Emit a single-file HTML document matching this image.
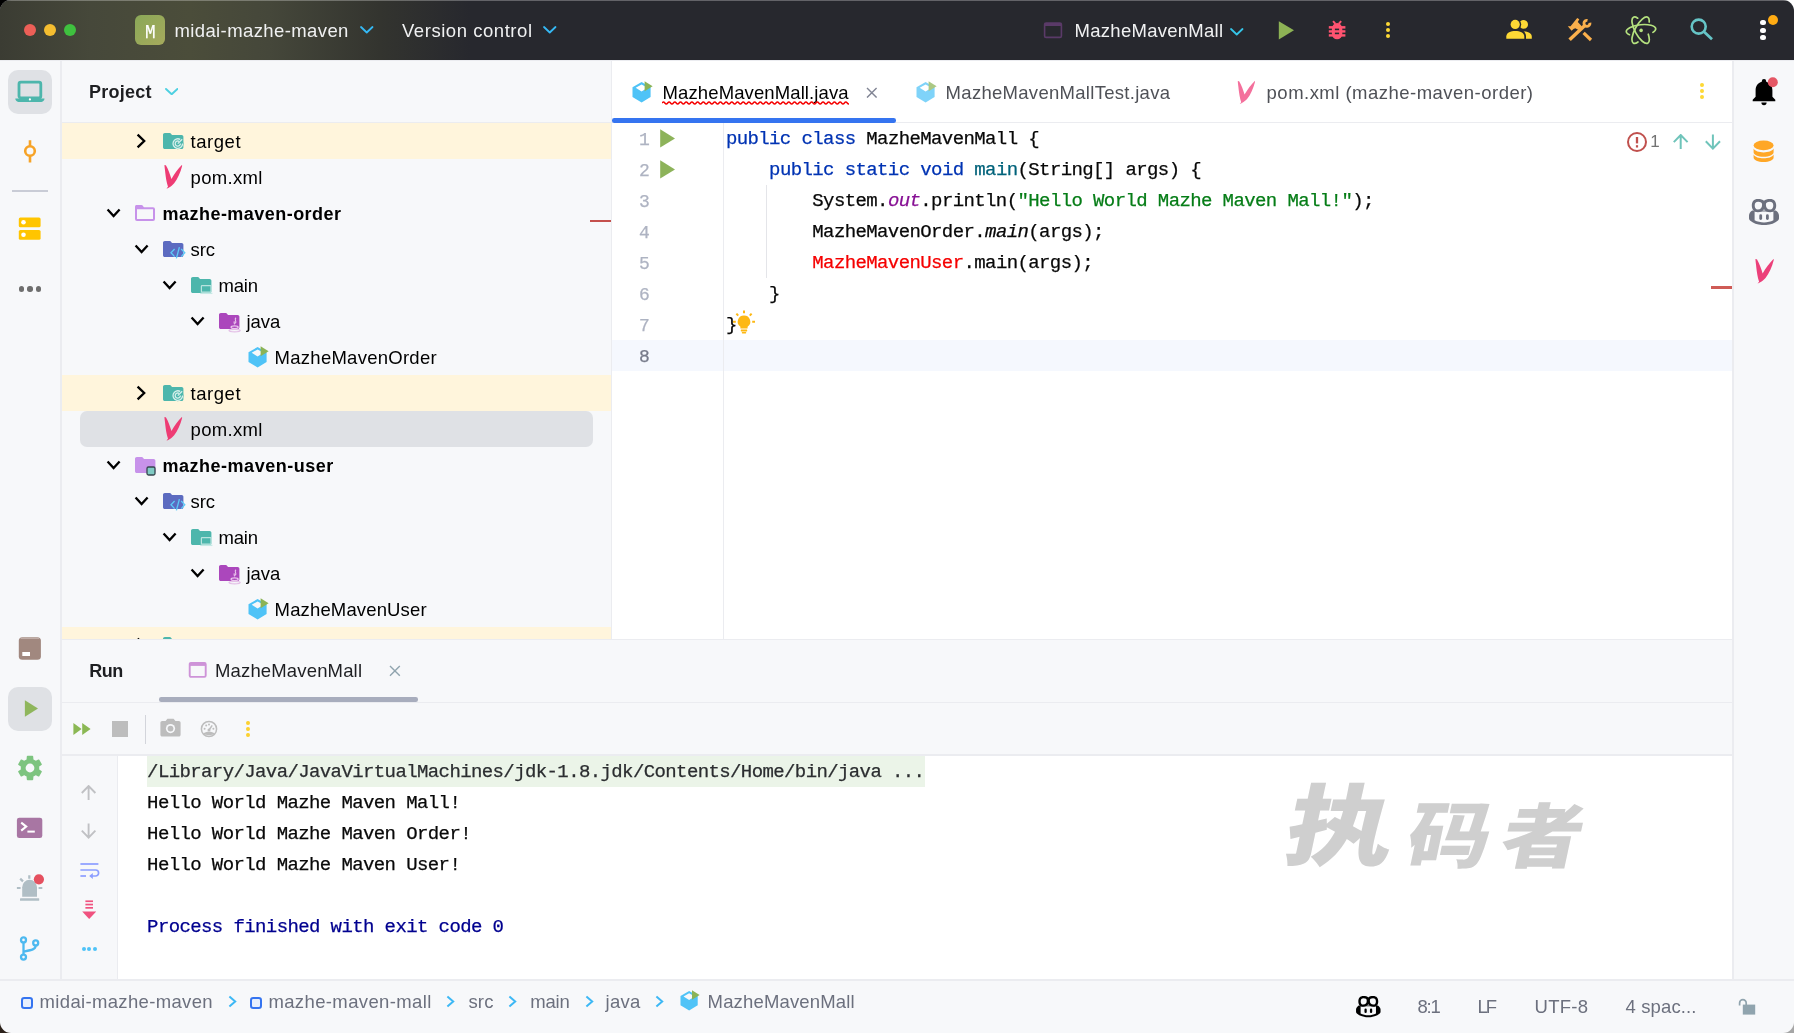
<!DOCTYPE html>
<html lang="en"><head><meta charset="utf-8"><title>midai-mazhe-maven – MazheMavenMall.java</title>
<style>
html,body{margin:0;padding:0;}
body{width:1794px;height:1033px;overflow:hidden;background:#fff;position:relative;font-family:"Liberation Sans",sans-serif;}
#win{position:absolute;left:0;top:0;width:1794px;height:1033px;overflow:hidden;will-change:transform;}
.b{position:absolute;display:block;}
.t{position:absolute;white-space:pre;display:block;}
</style></head><body><div id="win">
<div class="b" style="left:0px;top:0px;width:14px;height:14px;background:#000;"></div>
<div class="b" style="left:1780px;top:0px;width:14px;height:14px;background:#fff;"></div>
<div class="b" style="left:0px;top:1019px;width:14px;height:14px;background:#2b211a;"></div>
<div class="b" style="left:1780px;top:1019px;width:14px;height:14px;background:#a6a6a6;"></div>
<div class="b" style="left:0;top:0;width:1794px;height:1033px;border-radius:11px;overflow:hidden;background:#f7f8fa">
<div class="b" style="left:0;top:0;width:1794px;height:60px;background:#27282e"></div>
<div class="b" style="left:0;top:0;width:520px;height:60px;background:linear-gradient(90deg,#3b3c33 0px,#46483a 90px,#4b4d3a 190px,#45473a 270px,#33342f 380px,#27282e 470px)"></div>
<div class="b" style="left:0;top:0;width:1794px;height:1px;background:rgba(255,255,255,.28)"></div>
<div class="b" style="left:612px;top:61px;width:1121px;height:579px;background:#fff;"></div>
<div class="b" style="left:118px;top:755px;width:1615px;height:225px;background:#fff;"></div>
</div>
<div class="b" style="left:0px;top:60px;width:1794px;height:1px;background:#ebecf0;"></div>
<div class="b" style="left:60px;top:61px;width:1.5px;height:919px;background:#ebecf0;"></div>
<div class="b" style="left:611px;top:61px;width:1px;height:578px;background:#ebecf0;"></div>
<div class="b" style="left:1732px;top:61px;width:1.5px;height:919px;background:#ebecf0;"></div>
<div class="b" style="left:62px;top:122px;width:549px;height:1px;background:#ebecf0;"></div>
<div class="b" style="left:612px;top:122px;width:1120px;height:1px;background:#ebecf0;"></div>
<div class="b" style="left:61px;top:639px;width:1672px;height:1px;background:#ebecf0;"></div>
<div class="b" style="left:61px;top:701.5px;width:1672px;height:1px;background:#ebecf0;"></div>
<div class="b" style="left:61px;top:754px;width:1672px;height:1.5px;background:#ebecf0;"></div>
<div class="b" style="left:117px;top:755px;width:1px;height:225px;background:#ebecf0;"></div>
<div class="b" style="left:0px;top:979px;width:1794px;height:1.5px;background:#ebecf0;"></div>
<div class="b" style="left:723px;top:123px;width:1px;height:516px;background:#ebecf0;"></div>
<div class="b" style="left:24px;top:24px;width:12px;height:12px;background:#ec5f57;border-radius:50%"></div>
<div class="b" style="left:44px;top:24px;width:12px;height:12px;background:#f4bd30;border-radius:50%"></div>
<div class="b" style="left:64px;top:24px;width:12px;height:12px;background:#3fc13f;border-radius:50%"></div>
<div class="b" style="left:135px;top:15px;width:30px;height:30px;border-radius:6px;background:linear-gradient(135deg,#8aa858,#a6aa5c)"></div>
<span class="t" style="left:145.20px;top:20.54px;font:normal normal 20.5px/24px 'Liberation Mono', monospace;color:#fff;-webkit-text-stroke:0.25px;transform:scaleX(.86);transform-origin:left center;">M</span>
<span class="t" style="left:174.40px;top:18.99px;font:normal normal 18.5px/24px 'Liberation Sans', sans-serif;color:#f0f1f2;letter-spacing:0.400px;">midai-mazhe-maven</span>
<span class="t" style="left:402.00px;top:18.99px;font:normal normal 18.5px/24px 'Liberation Sans', sans-serif;color:#f0f1f2;letter-spacing:0.545px;">Version control</span>
<svg class="b" style="left:360px;top:26px;" width="13.5" height="8" viewBox="0 0 13.5 8"><path d="M1 1 L6.75 6.5 L12.5 1" fill="none" stroke="#35b9f5" stroke-width="1.8" stroke-linecap="round" stroke-linejoin="round"/></svg>
<svg class="b" style="left:543px;top:26px;" width="13.5" height="8" viewBox="0 0 13.5 8"><path d="M1 1 L6.75 6.5 L12.5 1" fill="none" stroke="#35b9f5" stroke-width="1.8" stroke-linecap="round" stroke-linejoin="round"/></svg>
<svg class="b" style="left:1043px;top:21px;" width="20" height="18" viewBox="0 0 20 18"><rect x="1.6" y="2" width="16.8" height="14.4" rx="1.5" fill="none" stroke="#5a3a68" stroke-width="1.6"/><rect x="1.6" y="2" width="16.8" height="3" fill="#5a3a68"/></svg>
<span class="t" style="left:1074.60px;top:18.99px;font:normal normal 18.5px/24px 'Liberation Sans', sans-serif;color:#f0f1f2;letter-spacing:0.270px;">MazheMavenMall</span>
<svg class="b" style="left:1230px;top:28px;" width="13.5" height="8" viewBox="0 0 13.5 8"><path d="M1 1 L6.75 6.5 L12.5 1" fill="none" stroke="#35c5e8" stroke-width="1.8" stroke-linecap="round" stroke-linejoin="round"/></svg>
<svg class="b" style="left:1277px;top:20px;" width="20" height="21" viewBox="0 0 20 21"><path d="M1.8 1.2 L17 10.2 L1.8 19.4 Z" fill="#8db255"/></svg>
<svg class="b" style="left:1327px;top:19px;" width="20" height="22" viewBox="0 0 20 22"><g fill="#ff5370"><rect x="4.900" y="4" width="10.400" height="16.300" rx="5.200" ry="5.600"/><rect x="1.800" y="7.100" width="16.600" height="2.500"/><rect x="1.800" y="11.200" width="16.600" height="2.400"/><rect x="1.800" y="15.200" width="16.600" height="2.400"/><path d="M5.300 2.800 L6.800 1.500 L9.200 4.300 L7.700 5.600Z M14.900 2.800 L13.400 1.500 L11 4.300 L12.500 5.600Z"/></g><rect x="7.900" y="9.600" width="4.200" height="1.600" fill="#27282e"/><rect x="7.900" y="13.600" width="4.200" height="1.600" fill="#27282e"/></svg>
<div class="b" style="left:1385.9px;top:21.9px;width:4.2px;height:4.2px;background:#fdd835;border-radius:50%"></div>
<div class="b" style="left:1385.9px;top:28.099999999999998px;width:4.2px;height:4.2px;background:#fdd835;border-radius:50%"></div>
<div class="b" style="left:1385.9px;top:34.3px;width:4.2px;height:4.2px;background:#fdd835;border-radius:50%"></div>
<svg class="b" style="left:1505px;top:18px;" width="28" height="22" viewBox="0 0 28 22"><g fill="#fdd835"><circle cx="18.600" cy="6.400" r="4.400"/><path d="M21 20.800 V18.200 C21 16.200 20.200 14.600 18.600 13.300 C22.600 13.600 26.800 15.200 26.800 18.400 V20.800Z"/></g><circle cx="10.200" cy="6.400" r="6" fill="#27282e"/><g fill="#fdd835"><circle cx="10.200" cy="6.400" r="4.600"/><path d="M1.300 20.800 V18.400 C1.300 14.800 5.800 13 10.300 13 S19.300 14.800 19.300 18.400 V20.800Z"/></g></svg>
<svg class="b" style="left:1566px;top:17px;" width="28" height="26" viewBox="0 0 28 26"><g stroke="#fbb04c" fill="none"><path d="M3.600 22.800 L18.800 8.400" stroke-width="3.500"/><path d="M25 23 L17.600 15.800" stroke-width="3.200"/><path d="M23.920 5.810 A3 3 0 1 1 21.490 3.380" stroke-width="2.900"/></g><path d="M1.800 9.300 L4.600 9.200 L11.200 1.100 L13.300 2.300 L11.800 5.100 L13.900 7.300 L16 9.400 L12.600 13 L9.300 11.200 L7.500 11.900 L5.600 13.700Z" fill="#fbb04c"/></svg>
<svg class="b" style="left:1625px;top:15px;" width="32" height="30" viewBox="0 0 32 30"><g fill="none" stroke="#b5e27f" stroke-width="1.700" stroke-linecap="round"><ellipse cx="16" cy="15.200" rx="14.800" ry="5.500" transform="rotate(-6 16 15.200)" stroke-dasharray="5 23.600 100"/><ellipse cx="15.600" cy="15.200" rx="14.800" ry="5.500" transform="rotate(61 15.600 15.200)" stroke-dasharray="38 19 100"/><ellipse cx="15.600" cy="15.200" rx="14.800" ry="5.500" transform="rotate(119 15.600 15.200)" stroke-dasharray="38.600 23 100"/></g><circle cx="16.100" cy="15.400" r="1.800" fill="#b5e27f"/></svg>
<svg class="b" style="left:1689px;top:17.1px;" width="26" height="25" viewBox="0 0 26 25"><circle cx="9.700" cy="9.600" r="7" fill="none" stroke="#66c5c7" stroke-width="2.600"/><path d="M15 14.800 L23 22.200" stroke="#66c5c7" stroke-width="2.800" stroke-linecap="butt"/></svg>
<div class="b" style="left:1760.4px;top:20.0px;width:5.2px;height:5.2px;background:#fff;border-radius:50%"></div>
<div class="b" style="left:1760.4px;top:27.599999999999998px;width:5.2px;height:5.2px;background:#fff;border-radius:50%"></div>
<div class="b" style="left:1760.4px;top:35.199999999999996px;width:5.2px;height:5.2px;background:#fff;border-radius:50%"></div>
<div class="b" style="left:1767.6px;top:14.8px;width:10.4px;height:10.4px;background:#ffab13;border-radius:50%"></div>
<div class="b" style="left:8px;top:70px;width:44px;height:44px;border-radius:10px;background:#dfe1e5"></div>
<svg class="b" style="left:14.6px;top:79.6px;" width="30" height="23" viewBox="0 0 30 23"><rect x="4" y="2.200" width="21.800" height="15.600" rx="1.800" fill="none" stroke="#4db6ac" stroke-width="2.800"/><path d="M0.300 18.600 h29.200 c0 1.900-1.300 3.300-3 3.300 h-23.200 c-1.700 0-3-1.400-3-3.300z" fill="#4db6ac"/><circle cx="14.900" cy="19.400" r="1.100" fill="#fff"/></svg>
<svg class="b" style="left:21.6px;top:139.4px;" width="16" height="24" viewBox="0 0 16 24"><circle cx="8" cy="12" r="4.800" fill="none" stroke="#f7a327" stroke-width="2.600"/><path d="M8 1.200 V7 M8 17 V23.400" stroke="#f7a327" stroke-width="2.600"/></svg>
<div class="b" style="left:12px;top:190px;width:36px;height:1.5px;background:#c9ccd6;"></div>
<svg class="b" style="left:18px;top:216px;" width="24" height="25" viewBox="0 0 24 25"><rect x="0.800" y="1.400" width="21.800" height="9.900" rx="1.600" fill="#ffc500"/><rect x="0.800" y="13.900" width="21.800" height="9.900" rx="1.600" fill="#ffc500"/><circle cx="5.500" cy="6.300" r="2.300" fill="#fff"/><circle cx="5.500" cy="18.800" r="2.300" fill="#fff"/></svg>
<div class="b" style="left:18.8px;top:286.3px;width:5.4px;height:5.4px;background:#6e6e6e;border-radius:50%"></div>
<div class="b" style="left:27.3px;top:286.3px;width:5.4px;height:5.4px;background:#6e6e6e;border-radius:50%"></div>
<div class="b" style="left:35.8px;top:286.3px;width:5.4px;height:5.4px;background:#6e6e6e;border-radius:50%"></div>
<svg class="b" style="left:18px;top:636px;" width="24" height="25" viewBox="0 0 24 25"><rect x="0.800" y="1.200" width="22.100" height="22.600" rx="3.600" fill="#a1887f"/><rect x="2.600" y="1.800" width="18.500" height="0.900" fill="#cdbdb7"/><rect x="4.300" y="16" width="7.700" height="4" fill="#fff"/></svg>
<div class="b" style="left:8px;top:687px;width:44px;height:44px;border-radius:10px;background:#dfe1e5"></div>
<svg class="b" style="left:22px;top:698px;" width="18" height="22" viewBox="0 0 18 22"><path d="M2.900 2.300 L16 10.500 L2.900 18.800 Z" fill="#8fb65c"/></svg>
<svg class="b" style="left:16.8px;top:755.3px;" width="26" height="26" viewBox="0 0 26 26"><path d="M15.41 24.35 L10.59 24.35 L10.34 21.18 L7.25 19.39 L4.38 20.76 L1.97 16.58 L4.59 14.79 L4.59 11.21 L1.97 9.42 L4.38 5.24 L7.25 6.61 L10.34 4.82 L10.59 1.65 L15.41 1.65 L15.66 4.82 L18.75 6.61 L21.62 5.24 L24.03 9.42 L21.41 11.21 L21.41 14.79 L24.03 16.58 L21.62 20.76 L18.75 19.39 L15.66 21.18Z" fill="#7dc47f" stroke="#7dc47f" stroke-width="1.600" stroke-linejoin="round"/><circle cx="13" cy="13" r="4.400" fill="#f7f8fa"/></svg>
<svg class="b" style="left:16px;top:816.7px;" width="28" height="22" viewBox="0 0 28 22"><rect x="0.900" y="0.700" width="25.400" height="20.400" rx="2.400" fill="#a876a3"/><path d="M5.200 5.600 L10.200 9.600 L5.200 13.600" fill="none" stroke="#fff" stroke-width="2.100"/><path d="M11.400 14.600 H18.800" stroke="#fff" stroke-width="2"/></svg>
<svg class="b" style="left:14px;top:870px;" width="34" height="34" viewBox="0 0 34 34"><g fill="#b0bec5"><path d="M8.200 26.800 v-9.600 a7.400 7.400 0 0 1 14.800 0 v9.600z"/><rect x="6" y="28.300" width="19.200" height="2.500" rx="0.400"/></g><g stroke="#b0bec5" stroke-width="2.200"><path d="M2.900 18 h3.700 M6.200 8.600 l2.800 2.800 M15.300 5.300 v3.400 M24.600 18 h3.700"/></g><circle cx="24.900" cy="9.300" r="5.100" fill="#e5505f"/></svg>
<svg class="b" style="left:19px;top:935px;" width="22" height="27" viewBox="0 0 22 27"><g fill="none" stroke="#4db9f0" stroke-width="2.300"><circle cx="4.500" cy="4.900" r="2.500"/><circle cx="4.500" cy="22.100" r="2.500"/><circle cx="16.700" cy="7.900" r="2.500"/><path d="M4.500 7.500 V19.500 M16.700 10.500 C16.700 14.600 12 15.200 4.500 16.600"/></g></svg>
<svg class="b" style="left:1751px;top:77px;" width="28" height="30" viewBox="0 0 28 30"><path d="M13 2 a2.2 2.2 0 0 1 2.2 2.2 v0.6 c3.9 1 6.2 4.3 6.2 8.4 v6.6 l2.9 2.9 v1.5 H1.7 v-1.5 l2.9-2.9 v-6.6 c0-4.1 2.3-7.4 6.2-8.4 v-0.6 A2.2 2.2 0 0 1 13 2z M10.4 25.6 h5.2 a2.6 2.6 0 0 1-5.2 0z" fill="#000"/><circle cx="21.8" cy="5.2" r="5" fill="#e55765"/></svg>
<svg class="b" style="left:1752px;top:139px;" width="24" height="24" viewBox="0 0 24 24"><g fill="#ffa726"><ellipse cx="11.6" cy="6.4" rx="10" ry="4.8"/><path d="M1.6 9.6 c1.4 2.6 5.4 3.8 10 3.8 s8.6-1.2 10-3.8 v3.6 c0 2.6-4.4 4.6-10 4.6 s-10-2-10-4.6z"/><path d="M1.6 15.4 c1.4 2.6 5.4 3.8 10 3.8 s8.6-1.2 10-3.8 v3 c0 2.6-4.4 4.6-10 4.6 s-10-2-10-4.6z"/></g></svg>
<svg class="b" style="left:1749px;top:198.7px;" width="30" height="26.2" viewBox="0 0 30 26.2"><path d="M3.2 11.6 C1.2 13 0 14.8 0 16.6 V19.6 C0 20.4 0.4 20.9 1 21.4 C4.6 24.4 9.6 26.1 15 26.1 S25.4 24.4 29 21.4 C29.6 20.9 30 20.4 30 19.6 V16.6 C30 14.8 28.8 13 26.800 11.600Z" fill="#6c707e"/><path d="M5.600 12.600 H24.400 V21.300 C21.700 22.700 18.500 23.500 15 23.500 S8.300 22.700 5.600 21.300Z" fill="#f7f8fa"/><path d="M9 0 C11.600 0 13.800 0.600 15 1.800 C16.200 0.600 18.400 0 21 0 C25.200 0 27.200 2.600 27.200 6.600 C27.200 10.800 24.800 13.200 21.200 13.200 C18.400 13.200 16.200 12.200 15 10.200 C13.800 12.200 11.600 13.200 8.800 13.200 C5.200 13.200 2.800 10.800 2.800 6.600 C2.800 2.600 4.800 0 9 0Z" fill="#6c707e"/><path d="M9.200 2.800 C11.800 2.800 13.100 3.600 13.100 5.800 C13.100 8.800 11.600 10.500 8.800 10.500 C6.600 10.500 5.700 9 5.700 6.600 C5.700 4 6.800 2.800 9.200 2.800Z M20.800 2.800 C18.200 2.800 16.900 3.600 16.900 5.800 C16.900 8.800 18.400 10.500 21.200 10.500 C23.400 10.500 24.300 9 24.300 6.600 C24.300 4 23.200 2.800 20.800 2.800Z" fill="#f7f8fa"/><rect x="10.300" y="15.300" width="2.800" height="5.600" rx="1.400" fill="#6c707e"/><rect x="17" y="15.300" width="2.800" height="5.600" rx="1.400" fill="#6c707e"/></svg>
<svg class="b" style="left:1754.8px;top:259px;" width="19" height="24.5" viewBox="0 0 18.4 24"><path d="M0.3 0.2 C0.9 0 1.5 0.2 1.9 0.6 C4.2 4.6 6 9.6 7.4 14.2 C10.2 9.4 14.2 3.8 18 0.1 C18.4 0.3 18.4 0.7 18.2 1.2 C16.6 7.6 13.6 14.2 10.2 18.6 C8.6 20.4 6.8 22 5 22.8 C4.2 23.2 3.2 23.8 2.4 23.9 C3 23.2 3.6 22.8 3.9 22.2 C2.4 17.8 1.6 12 1.2 8.5 C1 5.4 0.4 2.4 0.3 0.2Z" fill="#ec407a"/></svg>
<span class="t" style="left:89.00px;top:80.36px;font:normal bold 18px/24px 'Liberation Sans', sans-serif;color:#1e1f22;letter-spacing:0.245px;">Project</span>
<svg class="b" style="left:165px;top:87.6px;" width="13.4" height="7.8" viewBox="0 0 13.4 7.8"><path d="M1 1 L6.7 6.3 L12.4 1" fill="none" stroke="#4dd0e1" stroke-width="1.9" stroke-linecap="round" stroke-linejoin="round"/></svg>
<div class="b" style="left:62px;top:123px;width:549px;height:516px;overflow:hidden">
<div class="b" style="left:0;top:0px;width:549px;height:36px;background:#fff5dc"></div>
<svg class="b" style="left:74.39999999999999px;top:10px;" width="11" height="16" viewBox="0 0 11 16"> <path d="M1.6 1.6 L8.2 8 L1.6 14.4" fill="none" stroke="#000" stroke-width="2.300" stroke-linecap="butt" stroke-linejoin="miter"/></svg>
<svg class="b" style="left:101px;top:9.8px;" width="24" height="20" viewBox="0 0 24 20"><path d="M1.8 0 H6.6 C7.4 0 7.8 0.3 8.2 0.9 L9 2 H18.6 C19.6 2 20.4 2.8 20.4 3.8 V14.2 C20.4 15.2 19.6 16 18.6 16 H1.8 C0.8 16 0 15.2 0 14.2 V1.8 C0 0.8 0.8 0 1.8 0Z" fill="#4db6ac"/><circle cx="14.8" cy="10.6" r="5.6" fill="#4db6ac"/><g fill="none" stroke="#d7f0ec" stroke-width="1.3"><path d="M19.6 10.6 a4.8 4.8 0 1 1-2.4-4.2"/><path d="M17.4 10.600 a2.600 2.600 0 1 1-1.300-2.250"/><path d="M14.800 10.600 L19.200 6.200"/></g></svg>
<span class="t" style="left:128.60px;top:6.99px;font:normal normal 18.5px/24px 'Liberation Sans', sans-serif;color:#000;letter-spacing:0.537px;">target</span>
<svg class="b" style="left:102.4px;top:42px;" width="18.4" height="23.6" viewBox="0 0 18.4 24"><path d="M0.3 0.2 C0.9 0 1.5 0.2 1.9 0.6 C4.2 4.6 6 9.6 7.4 14.2 C10.2 9.4 14.2 3.8 18 0.1 C18.4 0.3 18.4 0.7 18.2 1.2 C16.6 7.6 13.6 14.2 10.2 18.6 C8.6 20.4 6.8 22 5 22.8 C4.2 23.2 3.2 23.8 2.4 23.9 C3 23.2 3.6 22.8 3.9 22.2 C2.4 17.8 1.6 12 1.2 8.5 C1 5.4 0.4 2.4 0.3 0.2Z" fill="#ee3c74"/></svg>
<span class="t" style="left:128.60px;top:42.99px;font:normal normal 18.5px/24px 'Liberation Sans', sans-serif;color:#000;letter-spacing:0.316px;">pom.xml</span>
<svg class="b" style="left:43.8px;top:85px;" width="16" height="11" viewBox="0 0 16 11"><path d="M1.6 1.4 L7.6 8 L13.6 1.4" fill="none" stroke="#000" stroke-width="2.300" stroke-linecap="butt" stroke-linejoin="miter"/></svg>
<svg class="b" style="left:73px;top:81.8px;" width="22" height="18" viewBox="0 0 22 18"><path d="M1 3.200 V14 C1 14.600 1.400 15 2 15 H18 C18.600 15 19 14.600 19 14 V4.200 C19 3.600 18.600 3.200 18 3.200 Z" fill="none" stroke="#c792ea" stroke-width="2"/><path d="M0 3.400 V1.600 C0 0.700 0.700 0 1.600 0 H6.400 C7.200 0 7.600 0.300 8 0.900 L9.600 3.400Z" fill="#c792ea"/></svg>
<span class="t" style="left:100.60px;top:79.16px;font:normal bold 18px/24px 'Liberation Sans', sans-serif;color:#000;letter-spacing:0.459px;">mazhe-maven-order</span>
<svg class="b" style="left:71.8px;top:121px;" width="16" height="11" viewBox="0 0 16 11"><path d="M1.6 1.4 L7.6 8 L13.6 1.4" fill="none" stroke="#000" stroke-width="2.300" stroke-linecap="butt" stroke-linejoin="miter"/></svg>
<svg class="b" style="left:101px;top:117.8px;" width="24" height="20" viewBox="0 0 24 20"><path d="M1.8 0 H6.6 C7.4 0 7.8 0.3 8.2 0.9 L9 2 H18.6 C19.6 2 20.4 2.8 20.4 3.8 V14.2 C20.4 15.2 19.6 16 18.6 16 H1.8 C0.8 16 0 15.2 0 14.2 V1.8 C0 0.8 0.8 0 1.8 0Z" fill="#5c6bc0"/><g fill="none" stroke="#5ccbf8" stroke-width="1.300"><path d="M11.600 8 L8 11.800 L11.600 15.600"/><path d="M18.200 8 L21.800 11.800 L18.200 15.600"/><path d="M16.400 6.200 L13.400 17.400"/></g></svg>
<span class="t" style="left:128.60px;top:114.99px;font:normal normal 18.5px/24px 'Liberation Sans', sans-serif;color:#000;letter-spacing:-0.136px;">src</span>
<svg class="b" style="left:99.8px;top:157px;" width="16" height="11" viewBox="0 0 16 11"><path d="M1.6 1.4 L7.6 8 L13.6 1.4" fill="none" stroke="#000" stroke-width="2.300" stroke-linecap="butt" stroke-linejoin="miter"/></svg>
<svg class="b" style="left:129px;top:153.8px;" width="24" height="20" viewBox="0 0 24 20"><path d="M1.8 0 H6.6 C7.4 0 7.8 0.3 8.2 0.9 L9 2 H18.6 C19.6 2 20.4 2.8 20.4 3.8 V14.2 C20.4 15.2 19.6 16 18.6 16 H1.8 C0.8 16 0 15.2 0 14.2 V1.8 C0 0.8 0.8 0 1.8 0Z" fill="#4db6ac"/><rect x="10.400" y="8.600" width="9.600" height="6.600" rx="0.600" fill="#4db6ac" stroke="#b9e3de" stroke-width="1.200"/><path d="M9.200 16.400 H21.400" stroke="#c6e9e5" stroke-width="1.300"/></svg>
<span class="t" style="left:156.60px;top:150.99px;font:normal normal 18.5px/24px 'Liberation Sans', sans-serif;color:#000;letter-spacing:-0.236px;">main</span>
<svg class="b" style="left:127.80000000000001px;top:193px;" width="16" height="11" viewBox="0 0 16 11"><path d="M1.6 1.4 L7.6 8 L13.6 1.4" fill="none" stroke="#000" stroke-width="2.300" stroke-linecap="butt" stroke-linejoin="miter"/></svg>
<svg class="b" style="left:157px;top:189.8px;" width="24" height="20" viewBox="0 0 24 20"><path d="M1.8 0 H6.6 C7.4 0 7.8 0.3 8.2 0.9 L9 2 H18.6 C19.6 2 20.4 2.8 20.4 3.8 V14.2 C20.4 15.2 19.6 16 18.6 16 H1.8 C0.8 16 0 15.2 0 14.2 V1.8 C0 0.8 0.8 0 1.8 0Z" fill="#ab47bc"/><g fill="none" stroke="#ecc9ee" stroke-width="1.100"><path d="M17 4.800 c-2.600 2 1.600 3.200-0.800 5.600 M15.400 8.400 c-1 1.200 0.600 1.800-0.200 3"/><ellipse cx="15.600" cy="14.200" rx="3.600" ry="1.300"/></g><ellipse cx="15.600" cy="17.600" rx="5.600" ry="1.300" fill="none" stroke="#e3bfe6" stroke-width="1.200"/></svg>
<span class="t" style="left:184.60px;top:186.99px;font:normal normal 18.5px/24px 'Liberation Sans', sans-serif;color:#000;letter-spacing:-0.118px;">java</span>
<svg class="b" style="left:185.6px;top:222.9px;opacity:1;" width="21" height="22.0" viewBox="0 0 21 22"><path fill-rule="evenodd" d="M9.6 1 L18.6 6.300 V16.100 L9.600 21.500 L0.500 16.100 V6.300Z M9.600 3.400 L3.700 6.800 L9.600 10.400 L15.500 6.800Z" fill="#4fc3f7"/><path d="M12.600 0.300 L20.600 5.300 L12.600 10.300Z" fill="#8bb356"/></svg>
<span class="t" style="left:212.60px;top:222.99px;font:normal normal 18.5px/24px 'Liberation Sans', sans-serif;color:#000;letter-spacing:0.261px;">MazheMavenOrder</span>
<div class="b" style="left:0;top:252px;width:549px;height:36px;background:#fff5dc"></div>
<svg class="b" style="left:74.39999999999999px;top:262px;" width="11" height="16" viewBox="0 0 11 16"> <path d="M1.6 1.6 L8.2 8 L1.6 14.4" fill="none" stroke="#000" stroke-width="2.300" stroke-linecap="butt" stroke-linejoin="miter"/></svg>
<svg class="b" style="left:101px;top:261.8px;" width="24" height="20" viewBox="0 0 24 20"><path d="M1.8 0 H6.6 C7.4 0 7.8 0.3 8.2 0.9 L9 2 H18.6 C19.6 2 20.4 2.8 20.4 3.8 V14.2 C20.4 15.2 19.6 16 18.6 16 H1.8 C0.8 16 0 15.2 0 14.2 V1.8 C0 0.8 0.8 0 1.8 0Z" fill="#4db6ac"/><circle cx="14.8" cy="10.6" r="5.6" fill="#4db6ac"/><g fill="none" stroke="#d7f0ec" stroke-width="1.3"><path d="M19.6 10.6 a4.8 4.8 0 1 1-2.4-4.2"/><path d="M17.4 10.600 a2.600 2.600 0 1 1-1.300-2.250"/><path d="M14.800 10.600 L19.200 6.200"/></g></svg>
<span class="t" style="left:128.60px;top:258.99px;font:normal normal 18.5px/24px 'Liberation Sans', sans-serif;color:#000;letter-spacing:0.537px;">target</span>
<div class="b" style="left:18px;top:288px;width:513px;height:36px;border-radius:7px;background:#dfe1e5"></div>
<svg class="b" style="left:102.4px;top:294px;" width="18.4" height="23.6" viewBox="0 0 18.4 24"><path d="M0.3 0.2 C0.9 0 1.5 0.2 1.9 0.6 C4.2 4.6 6 9.6 7.4 14.2 C10.2 9.4 14.2 3.8 18 0.1 C18.4 0.3 18.4 0.7 18.2 1.2 C16.6 7.6 13.6 14.2 10.2 18.6 C8.6 20.4 6.8 22 5 22.8 C4.2 23.2 3.2 23.8 2.4 23.9 C3 23.2 3.6 22.8 3.9 22.2 C2.4 17.8 1.6 12 1.2 8.5 C1 5.4 0.4 2.4 0.3 0.2Z" fill="#ee3c74"/></svg>
<span class="t" style="left:128.60px;top:294.99px;font:normal normal 18.5px/24px 'Liberation Sans', sans-serif;color:#000;letter-spacing:0.316px;">pom.xml</span>
<svg class="b" style="left:43.8px;top:337px;" width="16" height="11" viewBox="0 0 16 11"><path d="M1.6 1.4 L7.6 8 L13.6 1.4" fill="none" stroke="#000" stroke-width="2.300" stroke-linecap="butt" stroke-linejoin="miter"/></svg>
<svg class="b" style="left:73px;top:333.8px;" width="24" height="20" viewBox="0 0 24 20"><path d="M1.8 0 H6.6 C7.4 0 7.8 0.3 8.2 0.9 L9 2 H18.6 C19.6 2 20.4 2.8 20.4 3.8 V14.2 C20.4 15.2 19.6 16 18.6 16 H1.8 C0.8 16 0 15.2 0 14.2 V1.8 C0 0.8 0.8 0 1.8 0Z" fill="#c792ea"/><rect x="12" y="10" width="8" height="8" rx="1.500" fill="#80cbc4" stroke="#37474f" stroke-width="1.300"/></svg>
<span class="t" style="left:100.60px;top:331.16px;font:normal bold 18px/24px 'Liberation Sans', sans-serif;color:#000;letter-spacing:0.501px;">mazhe-maven-user</span>
<svg class="b" style="left:71.8px;top:373px;" width="16" height="11" viewBox="0 0 16 11"><path d="M1.6 1.4 L7.6 8 L13.6 1.4" fill="none" stroke="#000" stroke-width="2.300" stroke-linecap="butt" stroke-linejoin="miter"/></svg>
<svg class="b" style="left:101px;top:369.8px;" width="24" height="20" viewBox="0 0 24 20"><path d="M1.8 0 H6.6 C7.4 0 7.8 0.3 8.2 0.9 L9 2 H18.6 C19.6 2 20.4 2.8 20.4 3.8 V14.2 C20.4 15.2 19.6 16 18.6 16 H1.8 C0.8 16 0 15.2 0 14.2 V1.8 C0 0.8 0.8 0 1.8 0Z" fill="#5c6bc0"/><g fill="none" stroke="#5ccbf8" stroke-width="1.300"><path d="M11.600 8 L8 11.800 L11.600 15.600"/><path d="M18.200 8 L21.800 11.800 L18.200 15.600"/><path d="M16.400 6.200 L13.400 17.400"/></g></svg>
<span class="t" style="left:128.60px;top:366.99px;font:normal normal 18.5px/24px 'Liberation Sans', sans-serif;color:#000;letter-spacing:-0.136px;">src</span>
<svg class="b" style="left:99.8px;top:409px;" width="16" height="11" viewBox="0 0 16 11"><path d="M1.6 1.4 L7.6 8 L13.6 1.4" fill="none" stroke="#000" stroke-width="2.300" stroke-linecap="butt" stroke-linejoin="miter"/></svg>
<svg class="b" style="left:129px;top:405.8px;" width="24" height="20" viewBox="0 0 24 20"><path d="M1.8 0 H6.6 C7.4 0 7.8 0.3 8.2 0.9 L9 2 H18.6 C19.6 2 20.4 2.8 20.4 3.8 V14.2 C20.4 15.2 19.6 16 18.6 16 H1.8 C0.8 16 0 15.2 0 14.2 V1.8 C0 0.8 0.8 0 1.8 0Z" fill="#4db6ac"/><rect x="10.400" y="8.600" width="9.600" height="6.600" rx="0.600" fill="#4db6ac" stroke="#b9e3de" stroke-width="1.200"/><path d="M9.200 16.400 H21.400" stroke="#c6e9e5" stroke-width="1.300"/></svg>
<span class="t" style="left:156.60px;top:402.99px;font:normal normal 18.5px/24px 'Liberation Sans', sans-serif;color:#000;letter-spacing:-0.236px;">main</span>
<svg class="b" style="left:127.80000000000001px;top:445px;" width="16" height="11" viewBox="0 0 16 11"><path d="M1.6 1.4 L7.6 8 L13.6 1.4" fill="none" stroke="#000" stroke-width="2.300" stroke-linecap="butt" stroke-linejoin="miter"/></svg>
<svg class="b" style="left:157px;top:441.8px;" width="24" height="20" viewBox="0 0 24 20"><path d="M1.8 0 H6.6 C7.4 0 7.8 0.3 8.2 0.9 L9 2 H18.6 C19.6 2 20.4 2.8 20.4 3.8 V14.2 C20.4 15.2 19.6 16 18.6 16 H1.8 C0.8 16 0 15.2 0 14.2 V1.8 C0 0.8 0.8 0 1.8 0Z" fill="#ab47bc"/><g fill="none" stroke="#ecc9ee" stroke-width="1.100"><path d="M17 4.800 c-2.600 2 1.600 3.200-0.800 5.600 M15.400 8.400 c-1 1.200 0.600 1.800-0.200 3"/><ellipse cx="15.600" cy="14.200" rx="3.600" ry="1.300"/></g><ellipse cx="15.600" cy="17.600" rx="5.600" ry="1.300" fill="none" stroke="#e3bfe6" stroke-width="1.200"/></svg>
<span class="t" style="left:184.60px;top:438.99px;font:normal normal 18.5px/24px 'Liberation Sans', sans-serif;color:#000;letter-spacing:-0.118px;">java</span>
<svg class="b" style="left:185.6px;top:474.9px;opacity:1;" width="21" height="22.0" viewBox="0 0 21 22"><path fill-rule="evenodd" d="M9.6 1 L18.6 6.300 V16.100 L9.600 21.500 L0.500 16.100 V6.300Z M9.600 3.400 L3.700 6.800 L9.600 10.400 L15.500 6.800Z" fill="#4fc3f7"/><path d="M12.600 0.300 L20.600 5.300 L12.600 10.300Z" fill="#8bb356"/></svg>
<span class="t" style="left:212.60px;top:474.99px;font:normal normal 18.5px/24px 'Liberation Sans', sans-serif;color:#000;letter-spacing:0.144px;">MazheMavenUser</span>
<div class="b" style="left:0;top:504px;width:549px;height:36px;background:#fff5dc"></div>
<svg class="b" style="left:74.39999999999999px;top:514px;" width="11" height="16" viewBox="0 0 11 16"> <path d="M1.6 1.6 L8.2 8 L1.6 14.4" fill="none" stroke="#000" stroke-width="2.300" stroke-linecap="butt" stroke-linejoin="miter"/></svg>
<svg class="b" style="left:101px;top:513.8px;" width="24" height="20" viewBox="0 0 24 20"><path d="M1.8 0 H6.6 C7.4 0 7.8 0.3 8.2 0.9 L9 2 H18.6 C19.6 2 20.4 2.8 20.4 3.8 V14.2 C20.4 15.2 19.6 16 18.6 16 H1.8 C0.8 16 0 15.2 0 14.2 V1.8 C0 0.8 0.8 0 1.8 0Z" fill="#4db6ac"/><circle cx="14.8" cy="10.6" r="5.6" fill="#4db6ac"/><g fill="none" stroke="#d7f0ec" stroke-width="1.3"><path d="M19.6 10.6 a4.8 4.8 0 1 1-2.4-4.2"/><path d="M17.4 10.600 a2.600 2.600 0 1 1-1.300-2.250"/><path d="M14.800 10.600 L19.200 6.200"/></g></svg>
<span class="t" style="left:128.60px;top:510.99px;font:normal normal 18.5px/24px 'Liberation Sans', sans-serif;color:#000;letter-spacing:0.537px;">target</span>
</div>
<div class="b" style="left:590px;top:220px;width:21px;height:2px;background:#c4504c;"></div>
<svg class="b" style="left:632.4px;top:81.0px;opacity:1;" width="21" height="22.0" viewBox="0 0 21 22"><path fill-rule="evenodd" d="M9.6 1 L18.6 6.300 V16.100 L9.600 21.500 L0.500 16.100 V6.300Z M9.600 3.400 L3.700 6.800 L9.600 10.400 L15.500 6.800Z" fill="#4fc3f7"/><path d="M12.600 0.300 L20.600 5.300 L12.600 10.300Z" fill="#8bb356"/></svg>
<span class="t" style="left:662.60px;top:80.89px;font:normal normal 18.5px/24px 'Liberation Sans', sans-serif;color:#000;letter-spacing:0.108px;">MazheMavenMall.java</span>
<svg class="b" style="left:662px;top:100.5px;" width="187" height="4.0" viewBox="0 0 187 4.0"><path d="M0 2.00 Q1.43 0.00 2.85 2.00 Q4.28 4.00 5.70 2.00 Q7.12 0.00 8.55 2.00 Q9.97 4.00 11.40 2.00 Q12.83 0.00 14.25 2.00 Q15.68 4.00 17.10 2.00 Q18.53 0.00 19.95 2.00 Q21.38 4.00 22.80 2.00 Q24.23 0.00 25.65 2.00 Q27.07 4.00 28.50 2.00 Q29.93 0.00 31.35 2.00 Q32.77 4.00 34.20 2.00 Q35.62 0.00 37.05 2.00 Q38.48 4.00 39.90 2.00 Q41.33 0.00 42.75 2.00 Q44.18 4.00 45.60 2.00 Q47.02 0.00 48.45 2.00 Q49.88 4.00 51.30 2.00 Q52.73 0.00 54.15 2.00 Q55.58 4.00 57.00 2.00 Q58.43 0.00 59.85 2.00 Q61.27 4.00 62.70 2.00 Q64.12 0.00 65.55 2.00 Q66.98 4.00 68.40 2.00 Q69.83 0.00 71.25 2.00 Q72.67 4.00 74.10 2.00 Q75.53 0.00 76.95 2.00 Q78.38 4.00 79.80 2.00 Q81.23 0.00 82.65 2.00 Q84.08 4.00 85.50 2.00 Q86.92 0.00 88.35 2.00 Q89.78 4.00 91.20 2.00 Q92.62 0.00 94.05 2.00 Q95.48 4.00 96.90 2.00 Q98.33 0.00 99.75 2.00 Q101.17 4.00 102.60 2.00 Q104.03 0.00 105.45 2.00 Q106.88 4.00 108.30 2.00 Q109.73 0.00 111.15 2.00 Q112.58 4.00 114.00 2.00 Q115.42 0.00 116.85 2.00 Q118.28 4.00 119.70 2.00 Q121.12 0.00 122.55 2.00 Q123.98 4.00 125.40 2.00 Q126.83 0.00 128.25 2.00 Q129.68 4.00 131.10 2.00 Q132.53 0.00 133.95 2.00 Q135.38 4.00 136.80 2.00 Q138.22 0.00 139.65 2.00 Q141.08 4.00 142.50 2.00 Q143.93 0.00 145.35 2.00 Q146.78 4.00 148.20 2.00 Q149.62 0.00 151.05 2.00 Q152.47 4.00 153.90 2.00 Q155.33 0.00 156.75 2.00 Q158.18 4.00 159.60 2.00 Q161.03 0.00 162.45 2.00 Q163.88 4.00 165.30 2.00 Q166.72 0.00 168.15 2.00 Q169.58 4.00 171.00 2.00 Q172.43 0.00 173.85 2.00 Q175.28 4.00 176.70 2.00 Q178.12 0.00 179.55 2.00 Q180.97 4.00 182.40 2.00 Q183.83 0.00 185.25 2.00 Q186.68 4.00 188.10 2.00" fill="none" stroke="#f50000" stroke-width="1.4"/></svg>
<svg class="b" style="left:866.4px;top:86.6px;" width="11.6" height="11.6" viewBox="0 0 11.6 11.6"><path d="M1 1 L10.6 10.6 M10.6 1 L1 10.6" stroke="#818594" stroke-width="1.4" fill="none"/></svg>
<div class="b" style="left:612px;top:118.2px;width:284px;height:4.6px;border-radius:2.3px;background:#3574f0"></div>
<svg class="b" style="left:915.6px;top:81.0px;opacity:0.72;" width="21" height="22.0" viewBox="0 0 21 22"><path fill-rule="evenodd" d="M9.6 1 L18.6 6.300 V16.100 L9.600 21.500 L0.500 16.100 V6.300Z M9.600 3.400 L3.700 6.800 L9.600 10.400 L15.500 6.800Z" fill="#4fc3f7"/><path d="M12.600 0.300 L20.600 5.300 L12.600 10.300Z" fill="#8bb356"/></svg>
<span class="t" style="left:945.60px;top:80.89px;font:normal normal 18.5px/24px 'Liberation Sans', sans-serif;color:#4f5157;letter-spacing:0.292px;">MazheMavenMallTest.java</span>
<svg class="b" style="left:1237px;top:80.5px;" width="18.6" height="23" viewBox="0 0 18.4 24"><path d="M0.3 0.2 C0.9 0 1.5 0.2 1.9 0.6 C4.2 4.6 6 9.6 7.4 14.2 C10.2 9.4 14.2 3.8 18 0.1 C18.4 0.3 18.4 0.7 18.2 1.2 C16.6 7.6 13.6 14.2 10.2 18.6 C8.6 20.4 6.8 22 5 22.8 C4.2 23.2 3.2 23.8 2.4 23.9 C3 23.2 3.6 22.8 3.9 22.2 C2.4 17.8 1.6 12 1.2 8.5 C1 5.4 0.4 2.4 0.3 0.2Z" fill="#f4709c"/></svg>
<span class="t" style="left:1266.60px;top:80.89px;font:normal normal 18.5px/24px 'Liberation Sans', sans-serif;color:#4f5157;letter-spacing:0.479px;">pom.xml (mazhe-maven-order)</span>
<div class="b" style="left:1700.1px;top:82.89999999999999px;width:3.8px;height:3.8px;background:#fdd835;border-radius:50%"></div>
<div class="b" style="left:1700.1px;top:89.1px;width:3.8px;height:3.8px;background:#fdd835;border-radius:50%"></div>
<div class="b" style="left:1700.1px;top:95.3px;width:3.8px;height:3.8px;background:#fdd835;border-radius:50%"></div>
<div class="b" style="left:612px;top:340px;width:1120px;height:31px;background:#f5f8fe;"></div>
<div class="b" style="left:723px;top:340px;width:1px;height:31px;background:#ebecf0;"></div>
<span class="t" style="left:725.90px;top:126.94px;font:normal normal 19px/24px 'Liberation Mono', monospace;color:#0033b3;letter-spacing:-0.606px;-webkit-text-stroke:0.25px;">public</span>
<span class="t" style="left:801.50px;top:126.94px;font:normal normal 19px/24px 'Liberation Mono', monospace;color:#0033b3;letter-spacing:-0.606px;-webkit-text-stroke:0.25px;">class</span>
<span class="t" style="left:866.30px;top:126.94px;font:normal normal 19px/24px 'Liberation Mono', monospace;color:#080808;letter-spacing:-0.606px;-webkit-text-stroke:0.25px;">MazheMavenMall {</span>
<span class="t" style="left:769.10px;top:157.94px;font:normal normal 19px/24px 'Liberation Mono', monospace;color:#0033b3;letter-spacing:-0.606px;-webkit-text-stroke:0.25px;">public</span>
<span class="t" style="left:844.70px;top:157.94px;font:normal normal 19px/24px 'Liberation Mono', monospace;color:#0033b3;letter-spacing:-0.606px;-webkit-text-stroke:0.25px;">static</span>
<span class="t" style="left:920.30px;top:157.94px;font:normal normal 19px/24px 'Liberation Mono', monospace;color:#0033b3;letter-spacing:-0.606px;-webkit-text-stroke:0.25px;">void</span>
<span class="t" style="left:974.30px;top:157.94px;font:normal normal 19px/24px 'Liberation Mono', monospace;color:#00627a;letter-spacing:-0.606px;-webkit-text-stroke:0.25px;">main</span>
<span class="t" style="left:1017.50px;top:157.94px;font:normal normal 19px/24px 'Liberation Mono', monospace;color:#080808;letter-spacing:-0.606px;-webkit-text-stroke:0.25px;">(String[] args) {</span>
<span class="t" style="left:812.30px;top:188.94px;font:normal normal 19px/24px 'Liberation Mono', monospace;color:#080808;letter-spacing:-0.606px;-webkit-text-stroke:0.25px;">System.</span>
<span class="t" style="left:887.90px;top:188.94px;font:italic normal 19px/24px 'Liberation Mono', monospace;color:#871094;letter-spacing:-0.606px;-webkit-text-stroke:0.25px;">out</span>
<span class="t" style="left:920.30px;top:188.94px;font:normal normal 19px/24px 'Liberation Mono', monospace;color:#080808;letter-spacing:-0.606px;-webkit-text-stroke:0.25px;">.println(</span>
<span class="t" style="left:1017.50px;top:188.94px;font:normal normal 19px/24px 'Liberation Mono', monospace;color:#067d17;letter-spacing:-0.606px;-webkit-text-stroke:0.25px;">"Hello World Mazhe Maven Mall!"</span>
<span class="t" style="left:1352.30px;top:188.94px;font:normal normal 19px/24px 'Liberation Mono', monospace;color:#080808;letter-spacing:-0.606px;-webkit-text-stroke:0.25px;">);</span>
<span class="t" style="left:812.30px;top:219.94px;font:normal normal 19px/24px 'Liberation Mono', monospace;color:#080808;letter-spacing:-0.606px;-webkit-text-stroke:0.25px;">MazheMavenOrder.</span>
<span class="t" style="left:985.10px;top:219.94px;font:italic normal 19px/24px 'Liberation Mono', monospace;color:#080808;letter-spacing:-0.606px;-webkit-text-stroke:0.25px;">main</span>
<span class="t" style="left:1028.30px;top:219.94px;font:normal normal 19px/24px 'Liberation Mono', monospace;color:#080808;letter-spacing:-0.606px;-webkit-text-stroke:0.25px;">(args);</span>
<span class="t" style="left:812.30px;top:250.94px;font:normal normal 19px/24px 'Liberation Mono', monospace;color:#f50000;letter-spacing:-0.606px;-webkit-text-stroke:0.25px;">MazheMavenUser</span>
<span class="t" style="left:963.50px;top:250.94px;font:normal normal 19px/24px 'Liberation Mono', monospace;color:#080808;letter-spacing:-0.606px;-webkit-text-stroke:0.25px;">.main(args);</span>
<span class="t" style="left:769.10px;top:281.94px;font:normal normal 19px/24px 'Liberation Mono', monospace;color:#080808;-webkit-text-stroke:0.25px;">}</span>
<span class="t" style="left:725.90px;top:312.94px;font:normal normal 19px/24px 'Liberation Mono', monospace;color:#080808;-webkit-text-stroke:0.25px;">}</span>
<div class="b" style="left:766px;top:185px;width:1px;height:93px;background:#e4e5e9;"></div>
<span class="t" style="left:639.00px;top:127.70px;font:normal normal 18px/24px 'Liberation Mono', monospace;color:#aeb3c2;-webkit-text-stroke:0.25px;">1</span>
<span class="t" style="left:639.00px;top:158.70px;font:normal normal 18px/24px 'Liberation Mono', monospace;color:#aeb3c2;-webkit-text-stroke:0.25px;">2</span>
<span class="t" style="left:639.00px;top:189.70px;font:normal normal 18px/24px 'Liberation Mono', monospace;color:#aeb3c2;-webkit-text-stroke:0.25px;">3</span>
<span class="t" style="left:639.00px;top:220.70px;font:normal normal 18px/24px 'Liberation Mono', monospace;color:#aeb3c2;-webkit-text-stroke:0.25px;">4</span>
<span class="t" style="left:639.00px;top:251.70px;font:normal normal 18px/24px 'Liberation Mono', monospace;color:#aeb3c2;-webkit-text-stroke:0.25px;">5</span>
<span class="t" style="left:639.00px;top:282.70px;font:normal normal 18px/24px 'Liberation Mono', monospace;color:#aeb3c2;-webkit-text-stroke:0.25px;">6</span>
<span class="t" style="left:639.00px;top:313.70px;font:normal normal 18px/24px 'Liberation Mono', monospace;color:#aeb3c2;-webkit-text-stroke:0.25px;">7</span>
<span class="t" style="left:639.00px;top:344.70px;font:normal normal 18px/24px 'Liberation Mono', monospace;color:#767a8a;-webkit-text-stroke:0.25px;">8</span>
<svg class="b" style="left:659px;top:128px;" width="18" height="21" viewBox="0 0 18 21"><path d="M1.2 1.2 L16 10.400 L1.200 19.600Z" fill="#8db35a"/></svg>
<svg class="b" style="left:659px;top:159px;" width="18" height="21" viewBox="0 0 18 21"><path d="M1.2 1.2 L16 10.400 L1.200 19.600Z" fill="#8db35a"/></svg>
<svg class="b" style="left:732px;top:310px;" width="24" height="24" viewBox="0 0 24 24"><g fill="#fdb813"><path d="M12 5.400 a6.200 6.200 0 0 1 3.600 11.300 v1.900 h-7.200 v-1.900 a6.200 6.200 0 0 1 3.600-11.300z"/><rect x="8.800" y="19.600" width="6.400" height="1.800" rx="0.600"/><rect x="9.800" y="22" width="4.400" height="1.400" rx="0.600"/></g><g stroke="#fdb813" stroke-width="2"><path d="M12 0.600 V3.200 M4.400 3.600 L6.200 5.600 M19.600 3.600 L17.800 5.600 M1 11.800 H3.800 M20.200 11.800 H23"/></g></svg>
<svg class="b" style="left:1626px;top:131px;" width="22" height="22" viewBox="0 0 22 22"><circle cx="11" cy="11" r="9" fill="none" stroke="#c0504d" stroke-width="2"/><path d="M11 6 V12.400" stroke="#c0504d" stroke-width="2.300"/><rect x="9.900" y="14.200" width="2.200" height="2.300" fill="#c0504d"/></svg>
<span class="t" style="left:1650.20px;top:130.31px;font:normal normal 17px/24px 'Liberation Sans', sans-serif;color:#737373;">1</span>
<svg class="b" style="left:1673.4px;top:134.4px;" width="15.4" height="15.6" viewBox="0 0 15.4 15.6"><path d="M7.7 15.1 V1.200 M0.800 8.10 L7.7 1 L14.6 8.10" fill="none" stroke="#6fc4ba" stroke-width="2"/></svg>
<svg class="b" style="left:1705px;top:134px;" width="15.8" height="15.6" viewBox="0 0 15.8 15.6"><path d="M7.9 0.500 V14.4 M0.800 7.30 L7.9 14.6 L15.0 7.30" fill="none" stroke="#6fc4ba" stroke-width="2"/></svg>
<div class="b" style="left:1711px;top:286px;width:21px;height:3px;background:#cf5b56;"></div>
<span class="t" style="left:89.20px;top:659.36px;font:normal bold 18px/24px 'Liberation Sans', sans-serif;color:#1e1f22;letter-spacing:-0.500px;">Run</span>
<svg class="b" style="left:188.2px;top:661px;" width="20" height="18" viewBox="0 0 20 18"><rect x="1.700" y="1.900" width="16" height="14" rx="1.300" fill="none" stroke="#ce93d8" stroke-width="1.900"/><rect x="1.700" y="1.900" width="16" height="3" fill="#ce93d8"/></svg>
<span class="t" style="left:215.00px;top:659.19px;font:normal normal 18.5px/24px 'Liberation Sans', sans-serif;color:#1e1f22;letter-spacing:0.155px;">MazheMavenMall</span>
<svg class="b" style="left:389.4px;top:665px;" width="11.8" height="11.8" viewBox="0 0 11.8 11.8"><path d="M1 1 L10.8 10.8 M10.8 1 L1 10.8" stroke="#90a4ae" stroke-width="1.4" fill="none"/></svg>
<div class="b" style="left:159px;top:697.3px;width:259px;height:4.4px;border-radius:2.2px;background:#a8adbd"></div>
<svg class="b" style="left:72.8px;top:722px;" width="20" height="14" viewBox="0 0 20 14"><path d="M0.400 1 L8.600 7 L0.400 13Z M9.200 1 L17.600 7 L9.200 13Z" fill="#8bb854"/></svg>
<div class="b" style="left:112px;top:721px;width:16px;height:16px;background:#bdbdbd;"></div>
<div class="b" style="left:145px;top:714.5px;width:1px;height:29px;background:#d3d5db;"></div>
<svg class="b" style="left:159.6px;top:718px;" width="22" height="20" viewBox="0 0 22 20"><path d="M7.400 0.800 H13.600 L15.400 3 H18.800 C19.800 3 20.600 3.800 20.600 4.800 V16.800 C20.600 17.800 19.800 18.600 18.800 18.600 H2.200 C1.200 18.600 0.400 17.800 0.400 16.800 V4.800 C0.400 3.800 1.200 3 2.200 3 H5.600Z" fill="#bdbdbd"/><circle cx="10.500" cy="10.600" r="4.600" fill="#f7f8fa"/><circle cx="10.500" cy="10.600" r="2.900" fill="#bdbdbd"/></svg>
<svg class="b" style="left:200px;top:720.4px;" width="18" height="18" viewBox="0 0 18 18"><circle cx="9" cy="9" r="7.600" fill="none" stroke="#bdbdbd" stroke-width="1.500"/><path d="M9 10 L12.200 5.400" stroke="#bdbdbd" stroke-width="1.500"/><circle cx="9" cy="10" r="1.500" fill="#bdbdbd"/><g fill="#bdbdbd"><circle cx="4.600" cy="8.800" r="1"/><circle cx="6.200" cy="5.600" r="1"/><circle cx="9" cy="4.400" r="1"/><circle cx="13.400" cy="8.800" r="1"/></g><path d="M3.400 13.600 C5.600 11.200 12.400 11.200 14.600 13.600 C12.800 15.800 5.200 15.800 3.400 13.600Z" fill="#bdbdbd"/></svg>
<div class="b" style="left:246.1px;top:721.1px;width:3.8px;height:3.8px;background:#fcd12f;border-radius:50%"></div>
<div class="b" style="left:246.1px;top:727.2px;width:3.8px;height:3.8px;background:#fcd12f;border-radius:50%"></div>
<div class="b" style="left:246.1px;top:733.3000000000001px;width:3.8px;height:3.8px;background:#fcd12f;border-radius:50%"></div>
<div class="b" style="left:147px;top:756px;width:777.6px;height:31px;background:#ebf4e8;"></div>
<span class="t" style="left:147.10px;top:760.24px;font:normal normal 19px/24px 'Liberation Mono', monospace;color:#2b2d30;letter-spacing:-0.606px;-webkit-text-stroke:0.25px;">/Library/Java/JavaVirtualMachines/jdk-1.8.jdk/Contents/Home/bin/java ...</span>
<span class="t" style="left:147.10px;top:791.24px;font:normal normal 19px/24px 'Liberation Mono', monospace;color:#080808;letter-spacing:-0.606px;-webkit-text-stroke:0.25px;">Hello World Mazhe Maven Mall!</span>
<span class="t" style="left:147.10px;top:822.24px;font:normal normal 19px/24px 'Liberation Mono', monospace;color:#080808;letter-spacing:-0.606px;-webkit-text-stroke:0.25px;">Hello World Mazhe Maven Order!</span>
<span class="t" style="left:147.10px;top:853.24px;font:normal normal 19px/24px 'Liberation Mono', monospace;color:#080808;letter-spacing:-0.606px;-webkit-text-stroke:0.25px;">Hello World Mazhe Maven User!</span>
<span class="t" style="left:147.10px;top:915.24px;font:normal normal 19px/24px 'Liberation Mono', monospace;color:#00008f;letter-spacing:-0.606px;-webkit-text-stroke:0.25px;">Process finished with exit code 0</span>
<svg class="b" style="left:81.4px;top:785px;" width="15.2" height="15.6" viewBox="0 0 15.2 15.6"><path d="M7.6 15.1 V1.200 M0.800 8.00 L7.6 1 L14.399999999999999 8.00" fill="none" stroke="#c0c1c4" stroke-width="1.9"/></svg>
<svg class="b" style="left:81.4px;top:823px;" width="15.2" height="15.6" viewBox="0 0 15.2 15.6"><path d="M7.6 0.500 V14.4 M0.800 7.60 L7.6 14.6 L14.399999999999999 7.60" fill="none" stroke="#c0c1c4" stroke-width="1.9"/></svg>
<svg class="b" style="left:79.6px;top:862px;" width="20" height="18" viewBox="0 0 20 18"><g fill="none" stroke="#8c9eff" stroke-width="1.700"><path d="M0.400 2 H18.400"/><path d="M0.400 8 H15.600 a3 3 0 0 1 0 6 H10.600"/><path d="M0.400 14 H6"/></g><path d="M12.800 11 L9.200 14 L12.800 17Z" fill="#8c9eff"/></svg>
<svg class="b" style="left:82px;top:899.6px;" width="14.4" height="20" viewBox="0 0 14.4 20"><g fill="#f0527f"><rect x="3.400" y="0.400" width="7.600" height="1.700"/><rect x="3.400" y="3.700" width="7.600" height="1.700"/><rect x="3.400" y="7" width="7.600" height="1.700"/><path d="M0.200 11.600 H14.200 L7.200 19Z"/></g></svg>
<div class="b" style="left:81.6px;top:947px;width:4px;height:4px;background:#4fc3f7;border-radius:50%"></div>
<div class="b" style="left:87.4px;top:947px;width:4px;height:4px;background:#4fc3f7;border-radius:50%"></div>
<div class="b" style="left:93.2px;top:947px;width:4px;height:4px;background:#4fc3f7;border-radius:50%"></div>
<span class="t" style="left:1277px;top:765px;font-size:88px;line-height:110px;font-family:'Noto Sans CJK SC','WenQuanYi Zen Hei',sans-serif;font-weight:900;color:#cfcfcf;transform-origin:left bottom;transform:skewX(-12deg) scaleX(1.23);">执</span>
<span class="t" style="left:1399px;top:780.500px;font-size:72px;line-height:100px;font-family:'Noto Sans CJK SC','WenQuanYi Zen Hei',sans-serif;font-weight:900;color:#cfcfcf;transform-origin:left bottom;transform:skewX(-12deg) scaleX(1.16);">码</span>
<span class="t" style="left:1493px;top:782px;font-size:70px;line-height:100px;font-family:'Noto Sans CJK SC','WenQuanYi Zen Hei',sans-serif;font-weight:900;color:#cfcfcf;transform-origin:left bottom;transform:skewX(-12deg) scaleX(1.16);">者</span>
<div class="b" style="left:21.2px;top:997.4px;width:7.400px;height:7.600px;border:2px solid #3574f0;border-radius:3.200px;background:#e7effd"></div>
<span class="t" style="left:39.60px;top:989.79px;font:normal normal 18.5px/24px 'Liberation Sans', sans-serif;color:#6c707e;letter-spacing:0.338px;">midai-mazhe-maven</span>
<svg class="b" style="left:228px;top:995px;" width="9.5" height="13" viewBox="0 0 9.5 13"><path d="M1.400 1.400 L7.200 6.400 L1.400 11.400" fill="none" stroke="#3db8f5" stroke-width="2"/></svg>
<div class="b" style="left:250.2px;top:997.4px;width:7.400px;height:7.600px;border:2px solid #3574f0;border-radius:3.200px;background:#e7effd"></div>
<span class="t" style="left:268.40px;top:989.79px;font:normal normal 18.5px/24px 'Liberation Sans', sans-serif;color:#6c707e;letter-spacing:0.380px;">mazhe-maven-mall</span>
<svg class="b" style="left:446px;top:995px;" width="9.5" height="13" viewBox="0 0 9.5 13"><path d="M1.400 1.400 L7.200 6.400 L1.400 11.400" fill="none" stroke="#3db8f5" stroke-width="2"/></svg>
<span class="t" style="left:468.40px;top:989.79px;font:normal normal 18.5px/24px 'Liberation Sans', sans-serif;color:#6c707e;letter-spacing:0.164px;">src</span>
<svg class="b" style="left:508px;top:995px;" width="9.5" height="13" viewBox="0 0 9.5 13"><path d="M1.400 1.400 L7.200 6.400 L1.400 11.400" fill="none" stroke="#3db8f5" stroke-width="2"/></svg>
<span class="t" style="left:530.30px;top:989.79px;font:normal normal 18.5px/24px 'Liberation Sans', sans-serif;color:#6c707e;letter-spacing:-0.236px;">main</span>
<svg class="b" style="left:585px;top:995px;" width="9.5" height="13" viewBox="0 0 9.5 13"><path d="M1.400 1.400 L7.200 6.400 L1.400 11.400" fill="none" stroke="#3db8f5" stroke-width="2"/></svg>
<span class="t" style="left:605.60px;top:989.79px;font:normal normal 18.5px/24px 'Liberation Sans', sans-serif;color:#6c707e;letter-spacing:0.216px;">java</span>
<svg class="b" style="left:654.8px;top:995px;" width="9.5" height="13" viewBox="0 0 9.5 13"><path d="M1.400 1.400 L7.200 6.400 L1.400 11.400" fill="none" stroke="#3db8f5" stroke-width="2"/></svg>
<svg class="b" style="left:679.6px;top:990.1238095238095px;opacity:1;" width="20" height="20.952380952380953" viewBox="0 0 21 22"><path fill-rule="evenodd" d="M9.6 1 L18.6 6.300 V16.100 L9.600 21.500 L0.500 16.100 V6.300Z M9.600 3.400 L3.700 6.800 L9.600 10.400 L15.500 6.800Z" fill="#4fc3f7"/><path d="M12.600 0.300 L20.600 5.300 L12.600 10.300Z" fill="#8bb356"/></svg>
<span class="t" style="left:707.60px;top:989.79px;font:normal normal 18.5px/24px 'Liberation Sans', sans-serif;color:#6c707e;letter-spacing:0.155px;">MazheMavenMall</span>
<svg class="b" style="left:1356.4px;top:996.2px;" width="24.6" height="21.4" viewBox="0 0 30 26.2"><path d="M3.2 11.6 C1.2 13 0 14.8 0 16.6 V19.6 C0 20.4 0.4 20.9 1 21.4 C4.6 24.4 9.6 26.1 15 26.1 S25.4 24.4 29 21.4 C29.6 20.9 30 20.4 30 19.6 V16.6 C30 14.8 28.8 13 26.800 11.600Z" fill="#000"/><path d="M5.600 12.600 H24.400 V21.300 C21.700 22.700 18.500 23.500 15 23.500 S8.300 22.700 5.600 21.300Z" fill="#f7f8fa"/><path d="M9 0 C11.600 0 13.800 0.600 15 1.800 C16.200 0.600 18.400 0 21 0 C25.200 0 27.200 2.600 27.200 6.600 C27.200 10.800 24.800 13.200 21.200 13.200 C18.400 13.200 16.200 12.200 15 10.200 C13.800 12.200 11.600 13.200 8.800 13.200 C5.200 13.200 2.800 10.800 2.800 6.600 C2.800 2.600 4.800 0 9 0Z" fill="#000"/><path d="M9.200 2.800 C11.800 2.800 13.100 3.600 13.100 5.800 C13.100 8.800 11.600 10.500 8.800 10.500 C6.600 10.500 5.700 9 5.700 6.600 C5.700 4 6.800 2.800 9.200 2.800Z M20.800 2.800 C18.200 2.800 16.900 3.600 16.900 5.800 C16.900 8.800 18.400 10.500 21.200 10.500 C23.400 10.500 24.300 9 24.300 6.600 C24.300 4 23.200 2.800 20.800 2.800Z" fill="#f7f8fa"/><rect x="10.300" y="15.300" width="2.800" height="5.600" rx="1.400" fill="#000"/><rect x="17" y="15.300" width="2.800" height="5.600" rx="1.400" fill="#000"/></svg>
<span class="t" style="left:1417.40px;top:995.19px;font:normal normal 18.5px/24px 'Liberation Sans', sans-serif;color:#6c707e;letter-spacing:-1.159px;">8:1</span>
<span class="t" style="left:1477.40px;top:995.19px;font:normal normal 18.5px/24px 'Liberation Sans', sans-serif;color:#6c707e;letter-spacing:-1.994px;">LF</span>
<span class="t" style="left:1534.60px;top:995.19px;font:normal normal 18.5px/24px 'Liberation Sans', sans-serif;color:#6c707e;letter-spacing:0.245px;">UTF-8</span>
<span class="t" style="left:1625.60px;top:995.19px;font:normal normal 18.5px/24px 'Liberation Sans', sans-serif;color:#6c707e;letter-spacing:0.108px;">4 spac...</span>
<svg class="b" style="left:1738px;top:998px;" width="18" height="17.6" viewBox="0 0 18 17.6"><rect x="4.800" y="6.600" width="12.400" height="10" fill="#90a4ae"/><path d="M1.600 7.400 V5 a3.300 3.300 0 0 1 6.600 0 V7" fill="none" stroke="#90a4ae" stroke-width="1.700"/></svg>
</div></body></html>
